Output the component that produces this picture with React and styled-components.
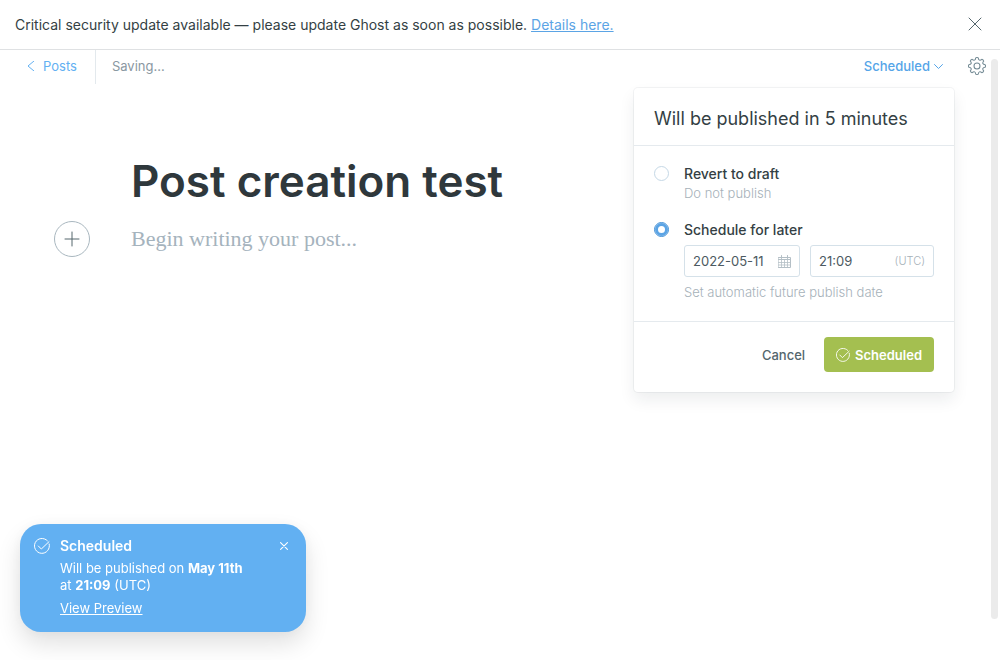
import React, { useState } from "react";
import styled, { createGlobalStyle } from "styled-components";

const GlobalStyle = createGlobalStyle`
  *, *::before, *::after { box-sizing: border-box; }
  body {
    margin: 0;
    background: #fff;
    color: #343f44;
    font-family: Inter, "Liberation Sans", sans-serif;
    font-size: 13px;
    line-height: 18px;
  }
  button, input, textarea {
    font: inherit;
    color: inherit;
    margin: 0;
    padding: 0;
    border: 0;
    background: none;
    outline: none;
  }
  button { cursor: pointer; }
  h1, h2, p { margin: 0; }
  svg { display: block; flex: none; }
`;

const Page = styled.div`
  display: flex;
  flex-direction: column;
  min-height: 100vh;
`;

const Alert = styled.div`
  display: flex;
  align-items: center;
  justify-content: space-between;
  height: 50px;
  padding: 0 18px 1px 15px;
  border-bottom: 1px solid #dfe1e3;
  font-size: 14px;
`;

const AlertText = styled.p`
  padding-top: 2px;
`;

const AlertLink = styled.a`
  color: #5ba4e5;
  text-decoration: underline;
`;

const IconButton = styled.button`
  display: flex;
  align-items: center;
  justify-content: center;
  color: ${(p) => p.$color || "#54666d"};
`;

const Workspace = styled.div`
  display: flex;
  flex: 1;
`;

const Editor = styled.main`
  flex: 1;
  min-width: 0;
`;

const ScrollThumb = styled.div`
  width: 7px;
  margin: 9px 2px 41px 0;
  border-radius: 4px;
  background: #ebebeb;
`;

const Toolbar = styled.header`
  display: flex;
  align-items: center;
  height: 34px;
  padding: 0 5px 2px 26px;
`;

const BackLink = styled.a`
  display: flex;
  align-items: center;
  gap: 7px;
  height: 34px;
  margin-bottom: -2px;
  padding: 0 18px 2px 0;
  border-right: 1px solid #e3e9ed;
  color: #62b0f2;
  text-decoration: none;
`;

const Status = styled.span`
  flex: 1;
  padding-left: 16px;
  color: #8a98a2;
`;

const Publish = styled.div`
  position: relative;
  margin-right: 25px;
`;

const PublishTrigger = styled.button`
  display: flex;
  align-items: center;
  gap: 4px;
  color: #55a5e8;
  font-weight: 500;
`;

const Panel = styled.form`
  position: absolute;
  top: 31px;
  right: -11px;
  width: 320px;
  border-radius: 4px;
  background: #fff;
  box-shadow: 0 0 0 1px rgba(99, 114, 130, 0.08), 0 8px 16px rgba(27, 39, 51, 0.08);
`;

const PanelHeader = styled.h2`
  padding: 20px 20px 15px;
  border-bottom: 1px solid #e5eaee;
  font-size: 18px;
  font-weight: 400;
  line-height: 22px;
`;

const PanelBody = styled.div`
  display: flex;
  flex-direction: column;
  gap: 18px;
  padding: 19px 20px;
`;

const Choice = styled.div`
  display: grid;
  grid-template-columns: 15px 1fr;
  column-gap: 15px;
`;

const Radio = styled.input`
  appearance: none;
  width: 15px;
  height: 15px;
  margin-top: 1px;
  border: 1px solid #c5d8e6;
  border-radius: 50%;
  background: #fff;
  &:checked {
    border-color: #3f8fd6;
    box-shadow: inset 0 0 0 3px #5ba4e5;
  }
`;

const ChoiceLabel = styled.label`
  font-size: 14px;
  font-weight: 500;
  line-height: 18px;
`;

const Hint = styled.p`
  grid-column: 2;
  color: #a6b1b9;
  font-weight: 300;
  line-height: 20px;
`;

const Fields = styled.div`
  grid-column: 2;
  display: flex;
  gap: 10px;
  margin: 6px 0 5px;
`;

const Field = styled.label`
  display: flex;
  align-items: center;
  width: ${(p) => p.$width};
  height: 32px;
  padding: 0 8px;
  border: 1px solid #d5e1e9;
  border-radius: 3px;
  color: #a6b1b9;
  font-size: 11px;
  font-weight: 300;
`;

const FieldInput = styled.input`
  flex: 1;
  min-width: 0;
  color: #4c5a61;
  font-size: 13px;
  font-weight: 400;
`;

const PanelFooter = styled.div`
  display: flex;
  justify-content: flex-end;
  gap: 19px;
  padding: 15px 20px 20px;
  border-top: 1px solid #e5eaee;
`;

const CancelButton = styled.button`
  height: 35px;
  color: #54666d;
  font-weight: 500;
`;

const ConfirmButton = styled.button`
  display: flex;
  align-items: center;
  gap: 5px;
  height: 35px;
  padding: 0 12px;
  border-radius: 4px;
  background: #a4bf50;
  color: #fff;
  font-weight: 600;
`;

const Document = styled.div`
  display: grid;
  grid-template-columns: 36px 1fr;
  column-gap: 41px;
  align-items: center;
  padding: 65px 40px 0 54px;
`;

const TitleInput = styled.input`
  grid-column: 2;
  width: 100%;
  height: 64px;
  color: #2f383c;
  font-size: 44px;
  font-weight: 600;
  line-height: 64px;
`;

const AddButton = styled.button`
  display: flex;
  align-items: center;
  justify-content: center;
  width: 36px;
  height: 36px;
  margin: 8px 0;
  border: 1px solid #a9b7bf;
  border-radius: 50%;
  color: #54666d;
`;

const BodyInput = styled.textarea`
  width: 100%;
  height: 30px;
  font-family: Georgia, "Liberation Serif", serif;
  font-size: 22px;
  line-height: 30px;
  resize: none;
  &::placeholder { color: #a5b3bd; opacity: 1; }
`;

const Toast = styled.aside`
  position: fixed;
  left: 20px;
  bottom: 28px;
  display: grid;
  grid-template-columns: 16px 1fr 10px;
  column-gap: 10px;
  align-items: center;
  width: 286px;
  padding: 13px 17px 15px 14px;
  border-radius: 21px;
  background: #62b0f2;
  color: #fff;
  box-shadow: 0 0 16px rgba(0, 0, 0, 0.04), 0 12px 24px rgba(0, 0, 0, 0.12);
`;

const ToastTitle = styled.h2`
  font-size: 14px;
  font-weight: 600;
  line-height: 18px;
`;

const ToastText = styled.p`
  grid-column: 2;
  margin: 5px 0;
  padding-right: 16px;
  line-height: 17px;
`;

const ToastLink = styled.a`
  grid-column: 2;
  justify-self: start;
  color: #fff;
`;

const Stroke = ({ size, box = 24, width = 1, children }) => (
  <svg
    width={size}
    height={size}
    viewBox={`0 0 ${box} ${box}`}
    fill="none"
    stroke="currentColor"
    strokeWidth={width}
    strokeLinecap="round"
    strokeLinejoin="round"
    aria-hidden="true"
  >
    {children}
  </svg>
);

const CloseIcon = ({ size, width }) => (
  <Stroke size={size} box={14} width={width}>
    <path d="M1 1l12 12M13 1L1 13" />
  </Stroke>
);

const CheckCircle = ({ size }) => (
  <Stroke size={size} box={24} width={1.5}>
    <path d="M22.8 9A11.2 11.2 0 1 1 20 4" />
    <path d="M6.5 12l4.500 4.500L22.500 5.500" />
  </Stroke>
);

const GEAR_TEETH = 8;

const gearPath = () => {
  const point = (radius, degrees) => {
    const a = (degrees * Math.PI) / 180;
    return `${(12 + radius * Math.sin(a)).toFixed(2)} ${(12 - radius * Math.cos(a)).toFixed(2)}`;
  };
  let d = `M${point(11, -9)}`;
  for (let i = 0; i < GEAR_TEETH; i += 1) {
    const a = (i * 360) / GEAR_TEETH;
    d += `Q${point(11.8, a)} ${point(11, a + 9)}C${point(7.8, a + 14)} ${point(7.8, a + 31)} ${point(11, a + 36)}`;
  }
  return `${d}Z`;
};

const GearIcon = () => (
  <Stroke size={18} box={24} width={1.4}>
    <path d={gearPath()} />
    <circle cx="12" cy="12" r="4" />
  </Stroke>
);

const CalendarIcon = () => (
  <Stroke size={13} box={13}>
    <g stroke="#b4bfc6">
      <path d="M.5 2.5h12v10H.5zM.5 4.500h12M3.500 .5v3M9.500 .5v3" />
      <path d="M.5 7.500h12M.5 10h12M3.500 5v7.500M6.500 5v7.500M9.500 5v7.500" strokeOpacity="0.8" />
    </g>
  </Stroke>
);

export default function App() {
  const [mode, setMode] = useState("schedule");
  return (
    <Page>
      <GlobalStyle />
      <Alert role="alert">
        <AlertText>
          Critical security update available — please update Ghost as soon as possible.{" "}
          <AlertLink href="#details">Details here.</AlertLink>
        </AlertText>
        <IconButton type="button" aria-label="Dismiss">
          <CloseIcon size={14} />
        </IconButton>
      </Alert>
      <Workspace>
        <Editor>
          <Toolbar>
            <BackLink href="#posts">
              <Stroke size={10} box={10}>
                <path d="M8 0L2 5l6 5" />
              </Stroke>
              Posts
            </BackLink>
            <Status>Saving...</Status>
            <Publish>
              <PublishTrigger type="button" aria-expanded="true">
                Scheduled
                <Stroke size={9} box={9}>
                  <path d="M.5 2.5l4 4 4-4" />
                </Stroke>
              </PublishTrigger>
              <Panel onSubmit={(e) => e.preventDefault()}>
                <PanelHeader>Will be published in 5 minutes</PanelHeader>
                <PanelBody>
                  <Choice>
                    <Radio
                      type="radio"
                      name="mode"
                      id="draft"
                      checked={mode === "draft"}
                      onChange={() => setMode("draft")}
                    />
                    <ChoiceLabel htmlFor="draft">Revert to draft</ChoiceLabel>
                    <Hint>Do not publish</Hint>
                  </Choice>
                  <Choice>
                    <Radio
                      type="radio"
                      name="mode"
                      id="schedule"
                      checked={mode === "schedule"}
                      onChange={() => setMode("schedule")}
                    />
                    <ChoiceLabel htmlFor="schedule">Schedule for later</ChoiceLabel>
                    <Fields>
                      <Field $width="116px">
                        <FieldInput aria-label="Date" defaultValue="2022-05-11" />
                        <CalendarIcon />
                      </Field>
                      <Field $width="124px">
                        <FieldInput aria-label="Time" defaultValue="21:09" />
                        (UTC)
                      </Field>
                    </Fields>
                    <Hint>Set automatic future publish date</Hint>
                  </Choice>
                </PanelBody>
                <PanelFooter>
                  <CancelButton type="button">Cancel</CancelButton>
                  <ConfirmButton type="submit">
                    <CheckCircle size={14} />
                    Scheduled
                  </ConfirmButton>
                </PanelFooter>
              </Panel>
            </Publish>
            <IconButton type="button" aria-label="Settings" $color="#738a94">
              <GearIcon />
            </IconButton>
          </Toolbar>
          <Document>
            <TitleInput aria-label="Post title" defaultValue="Post creation test" />
            <AddButton type="button" aria-label="Add a card">
              <Stroke size={16} box={16}>
                <path d="M8 1v14M1 8h14" />
              </Stroke>
            </AddButton>
            <BodyInput aria-label="Post body" placeholder="Begin writing your post..." />
          </Document>
        </Editor>
        <ScrollThumb />
      </Workspace>
      <Toast>
        <CheckCircle size={16} />
        <ToastTitle>Scheduled</ToastTitle>
        <IconButton type="button" aria-label="Close notification" $color="#fff">
          <CloseIcon size={8} width={2} />
        </IconButton>
        <ToastText>
          Will be published on <b>May 11th</b> at <b>21:09</b> (UTC)
        </ToastText>
        <ToastLink href="#preview">View Preview</ToastLink>
      </Toast>
    </Page>
  );
}
